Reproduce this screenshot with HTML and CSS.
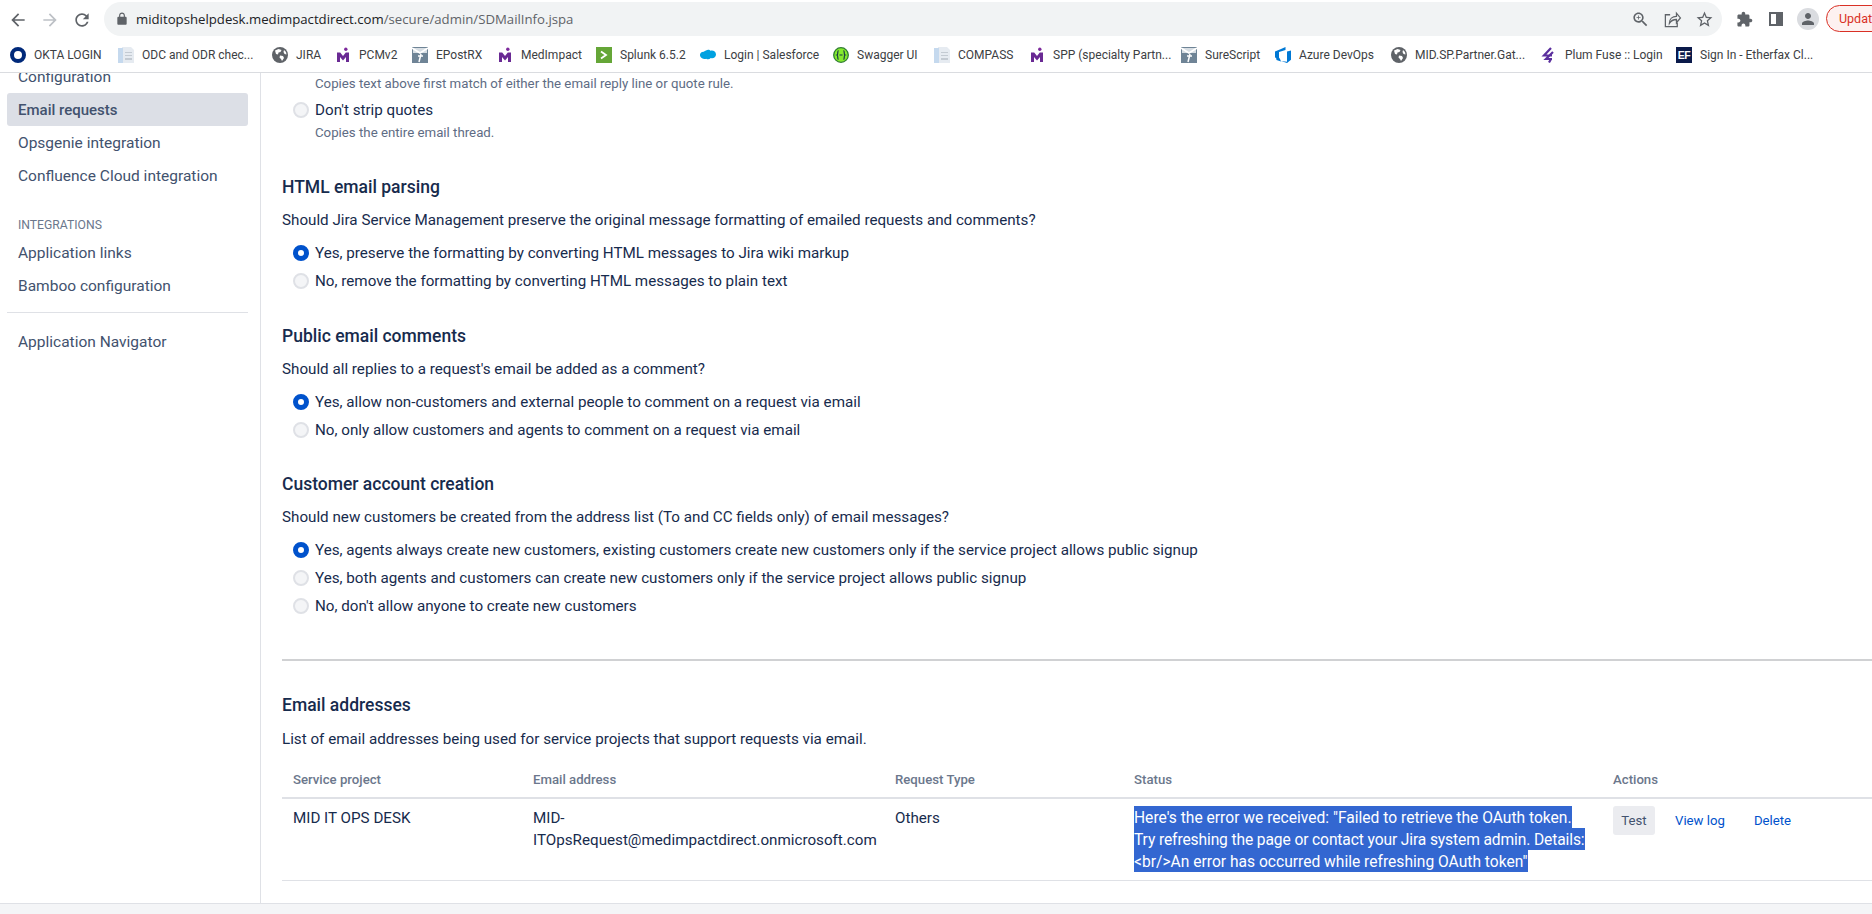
FILE: index.html
```html
<!DOCTYPE html>
<html lang="en">
<head>
    <meta charset="UTF-8">
    <title>Email requests</title>
    <link rel="stylesheet" href="styles.css">
</head>
<body>
    <svg class="defs" width="0" height="0">
        <symbol id="i-m" viewBox="0 0 16 16">
            <path fill="#6a2a94" d="M2 15V5.500h3.200L8 9l2.800-3.500H14V15h-3v-5l-3 3.500L5 10v5z"/>
            <circle cx="10.800" cy="2.300" r="1.700" fill="#7d2a9c"/>
        </symbol>
        <symbol id="i-globe" viewBox="0 0 16 16">
            <circle cx="8" cy="8" r="8" fill="#5f6368"/>
            <path fill="#fff" d="M3 3.500 6.500 2l3 1-1 2-2 .5-.5 2-2-.5zM8 8.500l3 .5 1 2-2 3-1-2-1.500-1.500zM12 3l2 2 .5 2.500-2-.5-1-2z"/>
        </symbol>
        <symbol id="i-doc" viewBox="0 0 16 16">
            <path fill="#e6ebf1" d="M4 0h9l3 3v13H4z"/>
            <path fill="#c5d9ee" d="M0 1h5v15H0z"/>
            <path fill="#c3cad2" d="M7 5h7v1H7zM7 8h7v1H7zM7 11h7v2H7z"/>
        </symbol>
        <symbol id="i-card" viewBox="0 0 16 16">
            <path fill="#6f8496" d="M0 0h16v16H0z"/>
            <path fill="#d7dee4" d="M1 1h14v5H1z"/>
            <path fill="none" stroke="#fff" stroke-width="1.500" d="M0 1l8 5 8-5M9 7l-2 8M6 9h5"/>
        </symbol>
    </svg>

    <header class="toolbar">
        <svg class="tb-icon" viewBox="0 0 24 24"><path fill="#5f6368" d="M20 11H7.830l5.590-5.590L12 4l-8 8 8 8 1.410-1.410L7.830 13H20v-2z"/></svg>
        <svg class="tb-icon" viewBox="0 0 24 24"><path fill="#bdc1c6" d="M4 11h12.170l-5.590-5.590L12 4l8 8-8 8-1.410-1.410L16.170 13H4v-2z"/></svg>
        <svg class="tb-icon" viewBox="0 0 24 24"><path fill="#5f6368" d="M17.650 6.350C16.200 4.900 14.210 4 12 4c-4.420 0-7.990 3.580-7.990 8s3.570 8 7.990 8c3.730 0 6.840-2.550 7.730-6h-2.080c-.82 2.330-3.040 4-5.650 4-3.310 0-6-2.690-6-6s2.690-6 6-6c1.660 0 3.140.69 4.220 1.780L13 11h7V4l-2.350 2.350z"/></svg>
        <div class="omnibox">
            <svg class="lock" viewBox="0 0 24 24"><path fill="#5f6368" d="M18 8h-1V6c0-2.760-2.240-5-5-5S7 3.240 7 6v2H6c-1.100 0-2 .9-2 2v10c0 1.100.9 2 2 2h12c1.100 0 2-.9 2-2V10c0-1.100-.9-2-2-2zM9 8V6c0-1.660 1.340-3 3-3s3 1.340 3 3v2z"/></svg>
            <span class="url"><span class="url-host">miditopshelpdesk.medimpactdirect.com</span>/secure/admin/SDMailInfo.jspa</span>
            <span class="omni-icons">
                <span class="slot"><svg class="pill-icon" viewBox="0 0 24 24"><path fill="#5f6368" d="M15.500 14h-.79l-.28-.27C15.410 12.590 16 11.110 16 9.500 16 5.910 13.090 3 9.500 3S3 5.910 3 9.500 5.910 16 9.500 16c1.610 0 3.090-.59 4.230-1.570l.27.28v.79l5 4.990L20.490 19zm-6 0C7.010 14 5 11.990 5 9.500S7.010 5 9.500 5 14 7.010 14 9.500 11.990 14 9.500 14zM12 10h-2v2H9v-2H7V9h2V7h1v2h2z"/></svg></span>
                <span class="slot"><svg class="pill-icon" viewBox="0 0 24 24"><path fill="none" stroke="#5f6368" stroke-width="1.600" d="M9 6H3v15h15v-5M8 17c0-6 4-9 9-9V4l5 6-5 6v-4c-4 0-7 1.500-9 5z"/></svg></span>
                <span class="slot"><svg class="pill-icon" viewBox="0 0 24 24"><path fill="#5f6368" d="M22 9.240l-7.190-.62L12 2 9.190 8.630 2 9.240l5.460 4.730L5.820 21 12 17.270 18.180 21l-1.630-7.030zM12 15.400l-3.760 2.270 1-4.280-3.320-2.880 4.380-.38L12 6.100l1.710 4.040 4.380.38-3.320 2.880 1 4.280z"/></svg></span>
            </span>
        </div>
        <span class="slot slot-first"><svg class="ext-icon" viewBox="0 0 24 24"><path fill="#5f6368" d="M20.500 11H19V7c0-1.100-.9-2-2-2h-4V3.500C13 2.120 11.880 1 10.500 1S8 2.120 8 3.500V5H4c-1.100 0-1.990.9-1.990 2v3.800H3.500c1.490 0 2.700 1.210 2.700 2.700s-1.210 2.700-2.700 2.700H2V20c0 1.100.9 2 2 2h3.800v-1.500c0-1.490 1.210-2.700 2.700-2.700 1.490 0 2.700 1.210 2.700 2.700V22H17c1.100 0 2-.9 2-2v-4h1.500c1.380 0 2.500-1.120 2.500-2.500S21.880 11 20.500 11z"/></svg></span>
        <span class="slot"><span class="side-panel"></span></span>
        <span class="slot"><span class="avatar"><svg viewBox="0 0 24 24"><path fill="#5f6368" d="M12 12c2.210 0 4-1.790 4-4s-1.790-4-4-4-4 1.790-4 4 1.790 4 4 4zm0 2c-2.670 0-8 1.340-8 4v2h16v-2c0-2.660-5.330-4-8-4z"/></svg></span></span>
        <span class="update">Update</span>
    </header>

    <nav class="bookmarks">
        <a class="bm"><svg class="bm-icon" viewBox="0 0 16 16"><circle cx="8" cy="8" r="6" fill="none" stroke="#00297a" stroke-width="4"/></svg>OKTA LOGIN</a>
        <a class="bm"><svg class="bm-icon"><use href="#i-doc"/></svg>ODC and ODR chec...</a>
        <a class="bm"><svg class="bm-icon"><use href="#i-globe"/></svg>JIRA</a>
        <a class="bm"><svg class="bm-icon"><use href="#i-m"/></svg>PCMv2</a>
        <a class="bm"><svg class="bm-icon"><use href="#i-card"/></svg>EPostRX</a>
        <a class="bm"><svg class="bm-icon"><use href="#i-m"/></svg>MedImpact</a>
        <a class="bm"><svg class="bm-icon" viewBox="0 0 16 16"><path fill="#65a637" d="M0 0h16v16H0z"/><path fill="none" stroke="#fff" stroke-width="1.800" d="M5 4.500 10 8l-5 3.500"/></svg>Splunk 6.5.2</a>
        <a class="bm"><svg class="bm-icon" viewBox="0 0 16 16"><path fill="#00a1e0" d="M6 3.500c1.800-1.500 3.800-.8 4.600.3 2.200-.8 5.400.6 5.400 3.700 0 3-3 4.500-5.200 3.600-1.400 1.500-3.400 1.500-4.600.6C3.500 12.500.5 11 0 8.500-.3 6.500 1.500 4.500 3.800 4.800 4.400 4.200 5.200 3.700 6 3.500z"/></svg>Login | Salesforce</a>
        <a class="bm"><svg class="bm-icon" viewBox="0 0 16 16"><circle cx="8" cy="8" r="7.300" fill="#85ea2d" stroke="#2f7d32" stroke-width="1.300"/><path fill="none" stroke="#173647" stroke-width="1.200" d="M5.500 3.500C4 4 5.500 7.500 4 8c1.500.5 0 4 1.500 4.500M10.500 3.500C12 4 10.500 7.500 12 8c-1.500.5 0 4-1.500 4.500M6.500 8h3"/></svg>Swagger UI</a>
        <a class="bm"><svg class="bm-icon"><use href="#i-doc"/></svg>COMPASS</a>
        <a class="bm"><svg class="bm-icon"><use href="#i-m"/></svg>SPP (specialty Partn...</a>
        <a class="bm"><svg class="bm-icon"><use href="#i-card"/></svg>SureScript</a>
        <a class="bm"><svg class="bm-icon" viewBox="0 0 16 16"><path fill="#0078d4" d="M16 3.500v9.300L12 16 6 14l6 .8V4.500zM10.500 0v3L4 5v7l-4-1.500V4.500L6 2z"/><path fill="#0078d4" d="M0 4.500 1.500 13 6 14.500 5 12z"/></svg>Azure DevOps</a>
        <a class="bm"><svg class="bm-icon"><use href="#i-globe"/></svg>MID.SP.Partner.Gat...</a>
        <a class="bm"><svg class="bm-icon" viewBox="0 0 16 16"><path fill="none" stroke="#5b2f9e" stroke-width="2.200" d="M10 1 3 8.500h8M12 5 5 12h6M10 12l-2 3.500"/></svg>Plum Fuse :: Login</a>
        <a class="bm"><span class="ef-icon">EF</span>Sign In - Etherfax Cl...</a>
    </nav>

    <div class="layout">
        <aside class="sidebar">
            <a class="side-item">Configuration</a>
            <a class="side-item active">Email requests</a>
            <a class="side-item">Opsgenie integration</a>
            <a class="side-item">Confluence Cloud integration</a>
            <div class="side-head">INTEGRATIONS</div>
            <a class="side-item">Application links</a>
            <a class="side-item">Bamboo configuration</a>
            <div class="side-rule"></div>
            <a class="side-item">Application Navigator</a>
        </aside>

        <main class="content">
            <p class="help">Copies text above first match of either the email reply line or quote rule.</p>
            <div class="opt"><span class="radio"></span>Don't strip quotes</div>
            <p class="help help-after">Copies the entire email thread.</p>

            <section class="section section-first">
                <h3>HTML email parsing</h3>
                <p class="lead">Should Jira Service Management preserve the original message formatting of emailed requests and comments?</p>
                <div class="opt"><span class="radio on"></span>Yes, preserve the formatting by converting HTML messages to Jira wiki markup</div>
                <div class="opt"><span class="radio"></span>No, remove the formatting by converting HTML messages to plain text</div>
            </section>

            <section class="section">
                <h3>Public email comments</h3>
                <p class="lead">Should all replies to a request's email be added as a comment?</p>
                <div class="opt"><span class="radio on"></span>Yes, allow non-customers and external people to comment on a request via email</div>
                <div class="opt"><span class="radio"></span>No, only allow customers and agents to comment on a request via email</div>
            </section>

            <section class="section">
                <h3>Customer account creation</h3>
                <p class="lead">Should new customers be created from the address list (To and CC fields only) of email messages?</p>
                <div class="opt"><span class="radio on"></span>Yes, agents always create new customers, existing customers create new customers only if the service project allows public signup</div>
                <div class="opt"><span class="radio"></span>Yes, both agents and customers can create new customers only if the service project allows public signup</div>
                <div class="opt"><span class="radio"></span>No, don't allow anyone to create new customers</div>
            </section>

            <hr class="rule">

            <section class="addresses">
                <h3>Email addresses</h3>
                <p class="lead">List of email addresses being used for service projects that support requests via email.</p>
                <table class="addr-table">
                    <thead>
                        <tr>
                            <th class="col-project">Service project</th>
                            <th class="col-email">Email address</th>
                            <th class="col-type">Request Type</th>
                            <th class="col-status">Status</th>
                            <th class="col-actions">Actions</th>
                        </tr>
                    </thead>
                    <tbody>
                        <tr>
                            <td class="cell-plain">MID IT OPS DESK</td>
                            <td class="cell-plain">MID-<br>ITOpsRequest@medimpactdirect.onmicrosoft.com</td>
                            <td class="cell-plain">Others</td>
                            <td>
                                <span class="selected">Here's the error we received: "Failed to retrieve the OAuth token.</span>
                                <span class="selected selected-tight">Try refreshing the page or contact your Jira system admin. Details:</span>
                                <span class="selected">&lt;br/&gt;An error has occurred while refreshing OAuth token"</span>
                            </td>
                            <td>
                                <div class="actions">
                                    <button type="button" class="test-btn">Test</button>
                                    <a class="action-link">View log</a>
                                    <a class="action-link">Delete</a>
                                </div>
                            </td>
                        </tr>
                    </tbody>
                </table>
            </section>
        </main>
    </div>

    <div class="footer"></div>
</body>
</html>
```

FILE: styles.css
```css
html, body {
    height: 100%;
}
body {
    margin: 0;
    height: 914px;
    overflow: hidden;
    display: flex;
    flex-direction: column;
    background-color: #fff;
    color: #172b4d;
    font-family: Roboto, "Liberation Sans", sans-serif;
    font-size: 15.2px;
    line-height: 22px;
}
.defs {
    position: absolute;
}

/* browser chrome */
.toolbar {
    flex: none;
    height: 40px;
    display: flex;
    align-items: center;
    gap: 12px;
    padding: 0 0 0 8px;
    box-sizing: border-box;
    overflow: hidden;
}
.tb-icon {
    flex: none;
    width: 20px;
    height: 20px;
}
.omnibox {
    flex: 1;
    min-width: 0;
    height: 34px;
    margin: -2px 0 0 0;
    display: flex;
    align-items: center;
    border-radius: 17px;
    background-color: #f1f3f4;
    padding: 0 2px 0 11px;
}
.lock {
    width: 14px;
    height: 14px;
    margin-right: 7px;
}
.url {
    flex: 1;
    font-family: "Open Sans", sans-serif;
    font-size: 13.2px;
    color: #5f6368;
    white-space: nowrap;
}
.url-host {
    color: #202124;
}
.omni-icons {
    display: flex;
}
.slot {
    flex: none;
    width: 32px;
    height: 32px;
    display: flex;
    align-items: center;
    justify-content: center;
}
.toolbar > .slot {
    margin-left: -12px;
    margin-top: -2px;
}
.toolbar > .slot-first {
    margin-left: -6px;
}
.pill-icon {
    width: 19px;
    height: 19px;
}
.ext-icon {
    width: 17px;
    height: 17px;
}
.side-panel {
    width: 14px;
    height: 14px;
    box-sizing: border-box;
    border: 2px solid #5f6368;
    border-right-width: 7px;
}
.avatar {
    width: 22px;
    height: 22px;
    border-radius: 50%;
    background-color: #dadce0;
    display: flex;
    align-items: center;
    justify-content: center;
}
.avatar svg {
    width: 18px;
    height: 18px;
}
.update {
    flex: none;
    width: 70px;
    height: 27px;
    box-sizing: border-box;
    margin: -3px -24px 0 -10px;
    padding-left: 12px;
    border: 1px solid #d93025;
    border-radius: 14px;
    background-color: #fdf1f0;
    color: #d93025;
    font-size: 12.5px;
    line-height: 25px;
}
.bookmarks {
    flex: none;
    height: 33px;
    box-sizing: border-box;
    border-bottom: 1px solid #dadce0;
    padding: 0 0 2px 10px;
    display: grid;
    grid-template-columns: 108px 154px 63px 77px 85px 99px 104px 133px 101px 95px 152px 94px 116px 150px 135px 180px;
    align-items: center;
}
.bm {
    display: flex;
    align-items: center;
    gap: 8px;
    font-size: 12px;
    color: #3c4043;
    white-space: nowrap;
}
.bm-icon {
    flex: none;
    width: 16px;
    height: 16px;
}
.ef-icon {
    flex: none;
    width: 16px;
    height: 16px;
    background-color: #0b1a4a;
    color: #fff;
    font-family: "Liberation Sans", sans-serif;
    font-size: 10.5px;
    font-weight: bold;
    line-height: 16px;
    text-align: center;
    letter-spacing: -0.5px;
}

/* page */
.layout {
    flex: 1;
    min-height: 0;
    display: flex;
}
.sidebar {
    flex: none;
    width: 261px;
    box-sizing: border-box;
    border-right: 1px solid #dfe1e6;
    padding: 0 12px 0 7px;
    overflow: hidden;
}
.side-item {
    display: block;
    height: 33px;
    line-height: 34px;
    padding-left: 11px;
    border-radius: 3px;
    color: #42526e;
    font-size: 15.5px;
}
.side-item:first-child {
    margin-top: -13px;
}
.side-item.active {
    background-color: #dcdfe6;
    font-size: 15px;
    font-weight: 500;
}
.side-head {
    margin-top: 22px;
    padding-left: 11px;
    color: #6b778c;
    font-size: 12.2px;
}
.side-rule {
    height: 1px;
    margin: 10px 0 12px;
    background-color: #dfe1e6;
}
.content {
    flex: 1;
    min-width: 0;
    padding-left: 21px;
    overflow: hidden;
}
p {
    margin: 0;
}
h3 {
    margin: 0 0 11px;
    font-size: 17.5px;
    font-weight: 500;
    line-height: 22px;
}
.help {
    margin: 0 0 1px 33px;
    color: #5e6c84;
    font-size: 13.25px;
}
.help-after {
    margin-top: -2px;
}
.opt {
    height: 28px;
    display: flex;
    align-items: center;
    gap: 6px;
    padding-left: 11px;
    white-space: nowrap;
}
.radio {
    flex: none;
    width: 16px;
    height: 16px;
    box-sizing: border-box;
    border: 2px solid #dfe1e6;
    border-radius: 50%;
    background-color: #f4f5f7;
}
.radio.on {
    border: 5px solid #0052cc;
    background-color: #fff;
}
.section {
    margin-top: 29.5px;
}
.section-first {
    margin-top: 32px;
}
.lead {
    margin-bottom: 8px;
}
.rule {
    height: 2px;
    margin: 39px 0 33px;
    border: none;
    background-color: #d0d1d3;
}
.addresses h3 {
    margin-bottom: 12px;
}
.addresses .lead {
    margin-bottom: 7px;
}
.addr-table {
    width: 1590px;
    border-collapse: separate;
    border-spacing: 0;
    table-layout: fixed;
}
.addr-table th {
    box-sizing: border-box;
    padding: 12px 11px 6px;
    border-bottom: 2px solid #dfe1e6;
    color: #6b778c;
    font-size: 13.2px;
    font-weight: 500;
    text-align: left;
}
.addr-table td {
    padding: 7px 11px 8px;
    border-bottom: 1px solid #dfe1e6;
    vertical-align: top;
}
.addr-table td.cell-plain {
    padding-top: 8px;
}
.col-project { width: 240px; }
.col-email { width: 362px; }
.col-type { width: 239px; }
.col-status { width: 479px; }
.col-actions { width: 270px; }
.selected {
    display: block;
    width: fit-content;
    height: 22px;
    background-color: #3367d1;
    color: #fff;
    font-size: 15.6px;
    line-height: 24px;
    white-space: nowrap;
}
.selected-tight {
    letter-spacing: -0.12px;
}
.actions {
    display: flex;
    align-items: center;
}
.test-btn {
    flex: none;
    width: 42px;
    height: 29px;
    padding: 0;
    border: none;
    border-radius: 3px;
    background-color: #ebecf0;
    color: #42526e;
    font-family: inherit;
    font-size: 13.2px;
}
.action-link {
    color: #0052cc;
    font-size: 13.2px;
    white-space: nowrap;
}
.test-btn + .action-link {
    margin-left: 20px;
}
.action-link + .action-link {
    margin-left: 29px;
}
.footer {
    flex: none;
    height: 10px;
    border-top: 1px solid #dfe1e6;
    background-color: #f4f5f7;
}
```
